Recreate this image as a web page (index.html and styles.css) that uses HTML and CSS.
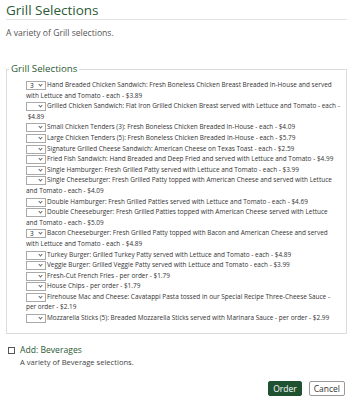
FILE: index.html
```html
<!DOCTYPE html>
<html lang="en">
<head>
<meta charset="utf-8">
<title>Grill Selections</title>
<link rel="stylesheet" href="styles.css">
</head>
<body>
<main class="page">
  <h1 class="title">Grill Selections</h1>
  <p class="intro">A variety of Grill selections.</p>

  <fieldset class="group">
    <legend class="group-legend">Grill Selections</legend>
    <div class="item"><span class="qty"><select><option>3</option></select></span>Hand Breaded Chicken Sandwich: Fresh Boneless Chicken Breast Breaded In-House and served with Lettuce and Tomato - each - $3.89</div>
    <div class="item"><span class="qty"><select><option></option></select></span>Grilled Chicken Sandwich: Flat Iron Grilled Chicken Breast served with Lettuce and Tomato - each -&nbsp;$4.89</div>
    <div class="item"><span class="qty"><select><option></option></select></span>Small Chicken Tenders (3): Fresh Boneless Chicken Breaded In-House - each - $4.09</div>
    <div class="item"><span class="qty"><select><option></option></select></span>Large Chicken Tenders (5): Fresh Boneless Chicken Breaded In-House - each - $5.79</div>
    <div class="item"><span class="qty"><select><option></option></select></span>Signature Grilled Cheese Sandwich: American Cheese on Texas Toast - each - $2.59</div>
    <div class="item"><span class="qty"><select><option></option></select></span>Fried Fish Sandwich: Hand Breaded and Deep Fried and served with Lettuce and Tomato - $4.99</div>
    <div class="item"><span class="qty"><select><option></option></select></span>Single Hamburger: Fresh Grilled Patty served with Lettuce and Tomato - each - $3.99</div>
    <div class="item"><span class="qty"><select><option></option></select></span>Single Cheeseburger: Fresh Grilled Patty topped with American Cheese and served with Lettuce and Tomato - each - $4.09</div>
    <div class="item"><span class="qty"><select><option></option></select></span>Double Hamburger: Fresh Grilled Patties served with Lettuce and Tomato - each - $4.69</div>
    <div class="item"><span class="qty"><select><option></option></select></span>Double Cheeseburger: Fresh Grilled Patties topped with American Cheese served with Lettuce and Tomato - each - $5.09</div>
    <div class="item"><span class="qty"><select><option>3</option></select></span>Bacon Cheeseburger: Fresh Grilled Patty topped with Bacon and American Cheese and served with Lettuce and Tomato - each - $4.89</div>
    <div class="item"><span class="qty"><select><option></option></select></span>Turkey Burger: Grilled Turkey Patty served with Lettuce and Tomato - each - $4.89</div>
    <div class="item"><span class="qty"><select><option></option></select></span>Veggie Burger: Grilled Veggie Patty served with Lettuce and Tomato - each - $3.99</div>
    <div class="item"><span class="qty"><select><option></option></select></span>Fresh-Cut French Fries - per order - $1.79</div>
    <div class="item"><span class="qty"><select><option></option></select></span>House Chips - per order - $1.79</div>
    <div class="item"><span class="qty"><select><option></option></select></span>Firehouse Mac and Cheese: Cavatappi Pasta tossed in our Special Recipe Three-Cheese Sauce - per order - $2.19</div>
    <div class="item"><span class="qty"><select><option></option></select></span>Mozzarella Sticks (5): Breaded Mozzarella Sticks served with Marinara Sauce - per order - $2.99</div>
  </fieldset>

  <section class="addon">
    <label class="addon-label"><span class="box"></span>Add: Beverages</label>
    <p class="addon-desc">A variety of Beverage selections.</p>
  </section>

  <div class="actions">
    <button class="btn btn-primary" type="button">Order</button>
    <button class="btn btn-default" type="button">Cancel</button>
  </div>
</main>
</body>
</html>
```

FILE: styles.css
```css
* { box-sizing: border-box; }

html, body {
  margin: 0;
  background: #ffffff;
}

body {
  font-family: "Open Sans", "DejaVu Sans", sans-serif;
  color: #333333;
}

.page {
  padding: 0 7px 0 6px;
}

.title {
  margin: 0;
  padding: 1px 0 0;
  font-size: 13.5px;
  line-height: 18px;
  font-weight: 400;
  color: #2b5a35;
  border-bottom: 1px solid #e3e3e3;
}

.intro {
  margin: 7px 0 0;
  font-size: 8.6px;
  line-height: 12px;
  color: #555555;
}

.group {
  margin: 24px 0 0;
  padding: 5px 6px 9px 19px;
  border: 1px solid #dcdcdc;
}

.group-legend {
  padding: 0 2px;
  margin-left: -17px;
  font-size: 9.7px;
  line-height: 12px;
  color: #2b5a35;
}

.item {
  font-size: 6.45px;
  line-height: 10.6px;
  color: #333333;
}

.qty {
  position: relative;
  display: inline-block;
  vertical-align: top;
  margin-top: 1px;
  width: 20px;
  height: 9px;
  margin-right: 1px;
}

.qty select {
  -webkit-appearance: none;
  appearance: none;
  display: block;
  width: 100%;
  height: 100%;
  margin: 0;
  padding: 0 0 0 3px;
  border: 1px solid #a9a9a9;
  border-radius: 0;
  background: #ffffff;
  font-family: inherit;
  font-size: 6.5px;
  line-height: 7px;
  color: #222222;
}

.qty::after {
  content: "";
  position: absolute;
  right: 4px;
  top: 2px;
  width: 2px;
  height: 2px;
  border-right: 1px solid #666;
  border-bottom: 1px solid #666;
  transform: rotate(45deg);
  pointer-events: none;
}

.addon {
  margin-top: 10px;
  padding-left: 2px;
}

.addon-label {
  display: flex;
  align-items: center;
  gap: 5px;
  font-size: 8.6px;
  line-height: 13px;
  color: #2b5a35;
}

.box {
  width: 7px;
  height: 7px;
  border: 1px solid #555555;
  background: #ffffff;
}

.addon-desc {
  margin: 0 0 0 12px;
  font-size: 7.6px;
  line-height: 11px;
  color: #444444;
}

.actions {
  display: flex;
  justify-content: flex-end;
  gap: 7px;
  margin-top: 13px;
  padding-right: 2px;
}

.btn {
  font-family: inherit;
  font-size: 8.5px;
  line-height: 11px;
  height: 15px;
  padding: 0 4px;
  border-radius: 2px;
  cursor: pointer;
}

.btn-primary {
  background: #1e5230;
  border: 1px solid #1e5230;
  color: #ffffff;
}

.btn-default {
  background: #ffffff;
  border: 1px solid #999999;
  color: #333333;
}
```
